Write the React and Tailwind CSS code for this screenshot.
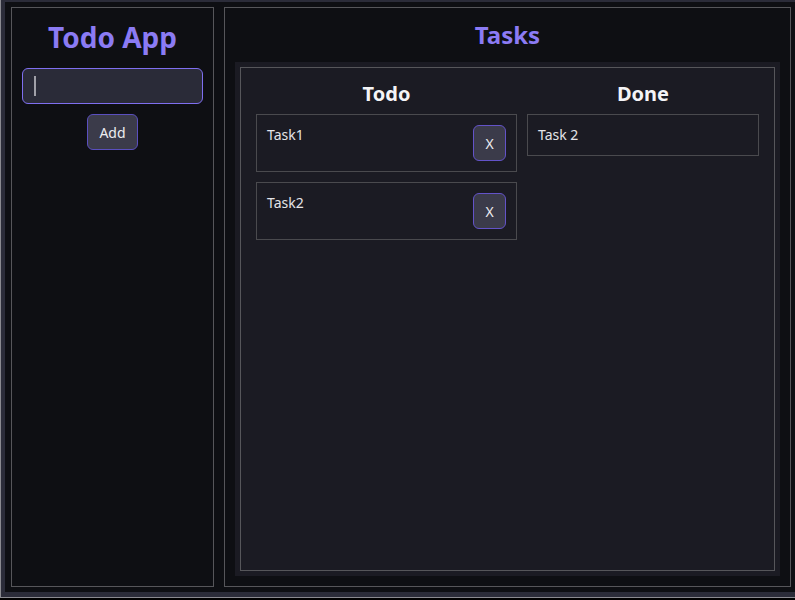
import React from "react";

function TodoCard({ text }) {
  return (
    <div className="flex items-start justify-between border border-[#4a4a4e] p-[10px]">
      <span className="block text-[14px] leading-[20px] text-[#e4e4e8]">{text}</span>
      <button className="flex h-[36px] w-[33px] items-center justify-center rounded-[6px] border border-[#6353c8] bg-[#3b3b4a] text-[14px] text-[#ececf0]">
        X
      </button>
    </div>
  );
}

export default function App() {
  return (
    <div className="h-[600px] w-[795px] bg-black font-['Noto_Sans',sans-serif]">
      <div className="flex h-[598px] flex-col border-b border-l border-[#8a8a90] bg-[#2b2c39] pb-[5px] pl-[4px] pt-[2px]">
        <div className="flex flex-1 gap-[10px] bg-[#0e0f13] pb-[5px] pl-[6px] pr-[4px] pt-[5px]">
          {/* Left panel */}
          <div className="flex w-[203px] flex-col items-center border border-[#56565a] px-[10px] pt-[10px]">
            <h1 className="mb-[12px] text-[28px] font-bold leading-[38px] text-[#8b7bf4]">Todo App</h1>
            <div className="relative h-[36px] w-full rounded-[6px] border border-[#7f6ff0] bg-[#2a2b38]">
              <input className="h-full w-full bg-transparent px-[11px] text-[14px] text-white caret-transparent outline-none" />
              <span className="absolute left-[11px] top-[7px] h-[20px] w-[2px] bg-[#a0a0a8]" />
            </div>
            <button className="mt-[10px] h-[36px] w-[51px] rounded-[6px] border border-[#5a4fbf] bg-[#3b3b4a] text-[14px] text-[#ececf0]">
              Add
            </button>
          </div>

          {/* Right panel */}
          <div className="flex flex-1 flex-col border border-[#56565a] px-[10px] pb-[10px] pt-[10px]">
            <h2 className="mb-[10px] text-center text-[24px] font-bold leading-[34px] text-[#8b7bf4]">Tasks</h2>
            <div className="flex flex-1 flex-col bg-[#1b1b23] p-[5px]">
              <div className="flex flex-1 gap-[10px] border border-[#56565a] px-[15px] pt-[12px]">
                <div className="flex w-[261px] flex-col">
                  <h3 className="mb-[6px] text-center text-[20px] font-bold leading-[28px] text-[#f4f4f6]">Todo</h3>
                  <div className="flex flex-col gap-[10px]">
                    <TodoCard text="Task1" />
                    <TodoCard text="Task2" />
                  </div>
                </div>
                <div className="flex flex-1 flex-col">
                  <h3 className="mb-[6px] text-center text-[20px] font-bold leading-[28px] text-[#f4f4f6]">Done</h3>
                  <div className="border border-[#4a4a4e] p-[10px]">
                    <div className="text-[14px] leading-[20px] text-[#e4e4e8]">Task 2</div>
                  </div>
                </div>
              </div>
            </div>
          </div>
        </div>
      </div>
    </div>
  );
}
